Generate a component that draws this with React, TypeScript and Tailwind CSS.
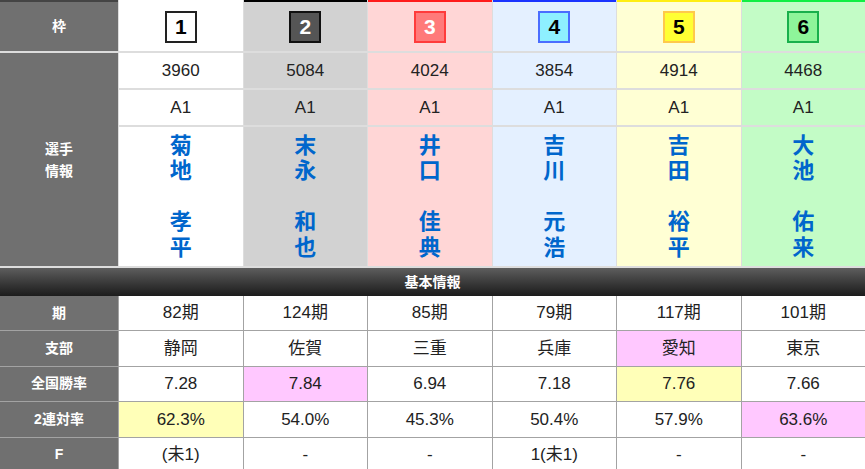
const font = "font-['Liberation_Sans','Noto_Sans_CJK_JP',sans-serif]";

type Frame = {
  no: number;
  topLine: string;
  colBg: string;
  box: string;
  id: string;
  name: [string, string];
};

const frames: Frame[] = [
  { no: 1, topLine: "bg-white", colBg: "bg-white", box: "bg-white border-[#222] text-black", id: "3960", name: ["菊地", "孝平"] },
  { no: 2, topLine: "bg-black", colBg: "bg-[#d2d2d2]", box: "bg-[#555] border-[#111] text-white", id: "5084", name: ["末永", "和也"] },
  { no: 3, topLine: "bg-[#ff1a1a]", colBg: "bg-[#ffd6d6]", box: "bg-[#ff7a7a] border-[#ff3b3b] text-white", id: "4024", name: ["井口", "佳典"] },
  { no: 4, topLine: "bg-[#1a33ff]", colBg: "bg-[#e4f0ff]", box: "bg-[#8ef0ff] border-[#4a6dff] text-black", id: "3854", name: ["吉川", "元浩"] },
  { no: 5, topLine: "bg-[#ffee11]", colBg: "bg-[#ffffd4]", box: "bg-[#ffff33] border-[#ffc94a] text-black", id: "4914", name: ["吉田", "裕平"] },
  { no: 6, topLine: "bg-[#11ee44]", colBg: "bg-[#c3fcc6]", box: "bg-[#8ef59a] border-[#18b04c] text-black", id: "4468", name: ["大池", "佑来"] },
];

type Tone = "pink" | "yellow" | undefined;

const rows: { label: string; cells: [string, Tone?][] }[] = [
  { label: "期", cells: [["82期"], ["124期"], ["85期"], ["79期"], ["117期"], ["101期"]] },
  { label: "支部", cells: [["静岡"], ["佐賀"], ["三重"], ["兵庫"], ["愛知", "pink"], ["東京"]] },
  { label: "全国勝率", cells: [["7.28"], ["7.84", "pink"], ["6.94"], ["7.18"], ["7.76", "yellow"], ["7.66"]] },
  { label: "2連対率", cells: [["62.3%", "yellow"], ["54.0%"], ["45.3%"], ["50.4%"], ["57.9%"], ["63.6%", "pink"]] },
  { label: "F", cells: [["(未1)"], ["-"], ["-"], ["1(未1)"], ["-"], ["-"]] },
];

const toneBg = (tone: Tone) =>
  tone === "pink" ? "bg-[#ffc8ff]" : tone === "yellow" ? "bg-[#ffffb8]" : "bg-white";

const cols = "grid grid-cols-[118px_repeat(6,minmax(0,1fr))] gap-x-px";

export default function App() {
  return (
    <div className={`${font} h-[469px] w-[865px] overflow-hidden bg-white text-[#222]`}>
      {/* colour strip over each frame */}
      <div className={`${cols} h-[2px] bg-[#ddd]`}>
        <div className="bg-[#444]" />
        {frames.map((f) => (
          <div className={f.topLine} key={f.no} />
        ))}
      </div>

      <div className={`${cols} grid-rows-[49px_35px_35px_139px] gap-y-[2px] bg-[#ddd] pb-[2px]`}>
        <div className="flex items-center justify-center bg-[#707070] text-[14px] font-bold text-white">枠</div>
        {frames.map((f) => (
          <div className={`flex items-center justify-center ${f.colBg}`} key={f.no}>
            <span className={`flex h-8 w-8 items-center justify-center border-2 text-[21px] font-bold leading-none ${f.box}`}>
              {f.no}
            </span>
          </div>
        ))}

        <div className="row-span-3 flex flex-col items-center justify-center bg-[#707070] text-[14px] font-bold leading-[22px] text-white">
          <span>選手</span>
          <span>情報</span>
        </div>
        {frames.map((f) => (
          <div className={`flex items-center justify-center text-[17px] ${f.colBg}`} key={f.no}>
            {f.id}
          </div>
        ))}
        {frames.map((f) => (
          <div className={`flex items-center justify-center text-[17px] ${f.colBg}`} key={f.no}>
            A1
          </div>
        ))}
        {frames.map((f) => (
          <div
            className={`flex flex-col items-center justify-center text-[22px] font-bold leading-[25.5px] text-[#0066cc] ${f.colBg}`}
            key={f.no}
          >
            <span>{f.name[0][0]}</span>
            <span>{f.name[0][1]}</span>
            <span>&nbsp;</span>
            <span>{f.name[1][0]}</span>
            <span>{f.name[1][1]}</span>
          </div>
        ))}
      </div>

      <div className="flex h-[28px] items-center justify-center bg-gradient-to-b from-[#5e5e5e] to-[#1c1c1c] text-[14px] font-bold text-white">
        基本情報
      </div>

      <div className={`${cols} auto-rows-[34.4px] gap-y-px bg-[#a3a3a3]`}>
        {rows.map((row) => (
          <div className="contents" key={row.label}>
            <div className="flex items-center justify-center bg-[#707070] text-[14px] font-bold text-white">
              {row.label}
            </div>
            {row.cells.map(([value, tone], i) => (
              <div className={`flex items-center justify-center text-[17px] ${toneBg(tone)}`} key={i}>
                {value}
              </div>
            ))}
          </div>
        ))}
      </div>
    </div>
  );
}
